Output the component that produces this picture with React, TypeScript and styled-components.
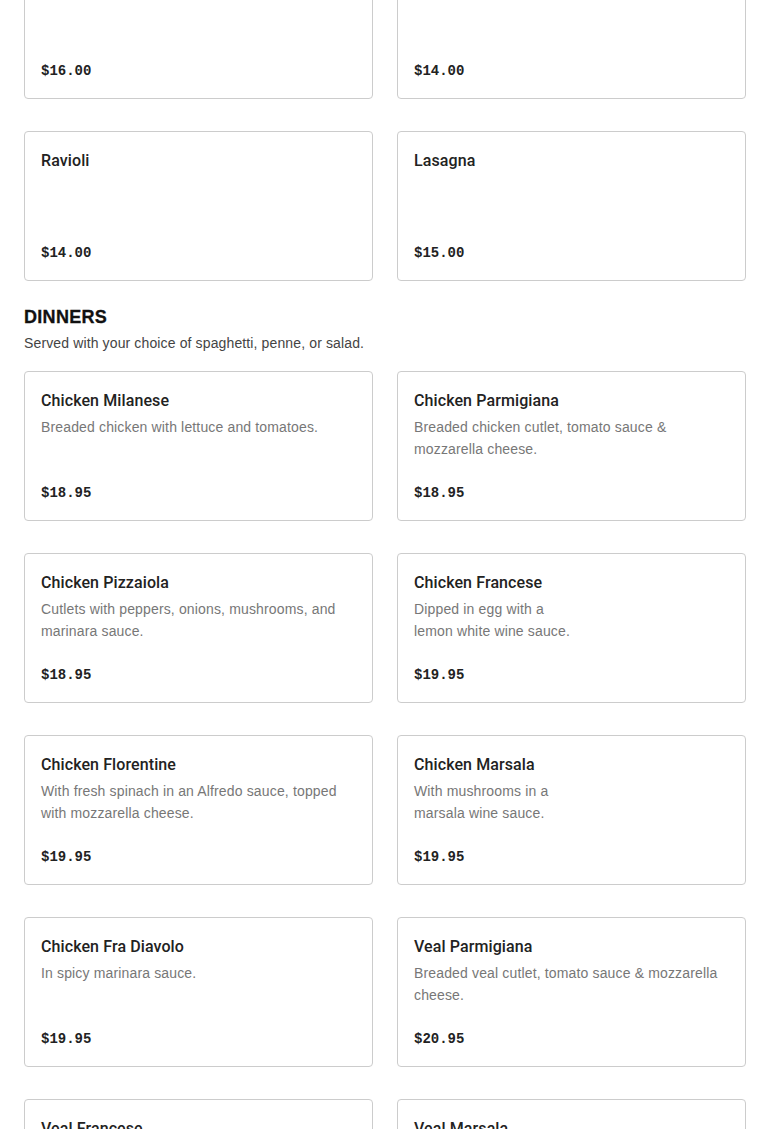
import React from "react";
import styled, { createGlobalStyle } from "styled-components";

const GlobalStyle = createGlobalStyle`
  body {
    margin: 0;
    background: #ffffff;
    font-family: "Liberation Sans", Arial, sans-serif;
    color: #222222;
  }
`;

const Page = styled.div`
  padding: 0 24px;
  margin-top: -51px; /* page is scrolled part way down */
`;

const Grid = styled.div`
  display: grid;
  grid-template-columns: 1fr 1fr;
  column-gap: 24px;
  row-gap: 32px;
`;

const Section = styled.section`
  margin-top: 24px;
  margin-bottom: 17px;
`;

const Heading = styled.h2`
  margin: 0;
  font-size: 18px;
  line-height: 24px;
  font-weight: 900;
  letter-spacing: 0.3px;
  color: #111111;
  -webkit-text-stroke: 0.3px #111111;
`;

const Subtitle = styled.p`
  margin: 3px 0 0;
  font-size: 14px;
  line-height: 22px;
  letter-spacing: 0.13px;
  color: #444444;
`;

const Card = styled.div`
  height: 150px;
  box-sizing: border-box;
  border: 1px solid #cccccc;
  border-radius: 4px;
  padding: 17px 16px 15px;
  display: flex;
  flex-direction: column;
  justify-content: space-between;
  background: #ffffff;
`;

const Name = styled.div`
  font-family: Roboto, "Liberation Sans", sans-serif;
  font-size: 16px;
  line-height: 24px;
  font-weight: 500;
  letter-spacing: 0.1px;
  color: #222222;
`;

const Desc = styled.div`
  margin-top: 3px;
  font-size: 14px;
  line-height: 22px;
  letter-spacing: 0.15px;
  color: #777777;
`;

const Price = styled.div`
  font-family: "Liberation Mono", "Courier New", monospace;
  font-size: 14px;
  line-height: 24px;
  font-weight: 700;
  color: #222222;
`;

type Item = { name: string; desc?: React.ReactNode; price: string };

const pasta: Item[] = [
  { name: "", price: "$16.00" },
  { name: "", price: "$14.00" },
  { name: "Ravioli", price: "$14.00" },
  { name: "Lasagna", price: "$15.00" },
];

const dinners: Item[] = [
  { name: "Chicken Milanese", desc: "Breaded chicken with lettuce and tomatoes.", price: "$18.95" },
  { name: "Chicken Parmigiana", desc: "Breaded chicken cutlet, tomato sauce & mozzarella cheese.", price: "$18.95" },
  { name: "Chicken Pizzaiola", desc: "Cutlets with peppers, onions, mushrooms, and marinara sauce.", price: "$18.95" },
  {
    name: "Chicken Francese",
    desc: (
      <>
        Dipped in egg with a<br />lemon white wine sauce.
      </>
    ),
    price: "$19.95",
  },
  { name: "Chicken Florentine", desc: "With fresh spinach in an Alfredo sauce, topped with mozzarella cheese.", price: "$19.95" },
  {
    name: "Chicken Marsala",
    desc: (
      <>
        With mushrooms in a<br />marsala wine sauce.
      </>
    ),
    price: "$19.95",
  },
  { name: "Chicken Fra Diavolo", desc: "In spicy marinara sauce.", price: "$19.95" },
  { name: "Veal Parmigiana", desc: "Breaded veal cutlet, tomato sauce & mozzarella cheese.", price: "$20.95" },
  { name: "Veal Francese", price: "" },
  { name: "Veal Marsala", price: "" },
];

const MenuCard = ({ item }: { item: Item }) => (
  <Card>
    <div>
      {item.name && <Name>{item.name}</Name>}
      {item.desc && <Desc>{item.desc}</Desc>}
    </div>
    <Price>{item.price}</Price>
  </Card>
);

export default function App() {
  return (
    <>
      <GlobalStyle />
      <Page>
        <Grid>
          {pasta.map((item, i) => (
            <MenuCard key={i} item={item} />
          ))}
        </Grid>
        <Section>
          <Heading>DINNERS</Heading>
          <Subtitle>Served with your choice of spaghetti, penne, or salad.</Subtitle>
        </Section>
        <Grid>
          {dinners.map((item) => (
            <MenuCard key={item.name} item={item} />
          ))}
        </Grid>
      </Page>
    </>
  );
}
